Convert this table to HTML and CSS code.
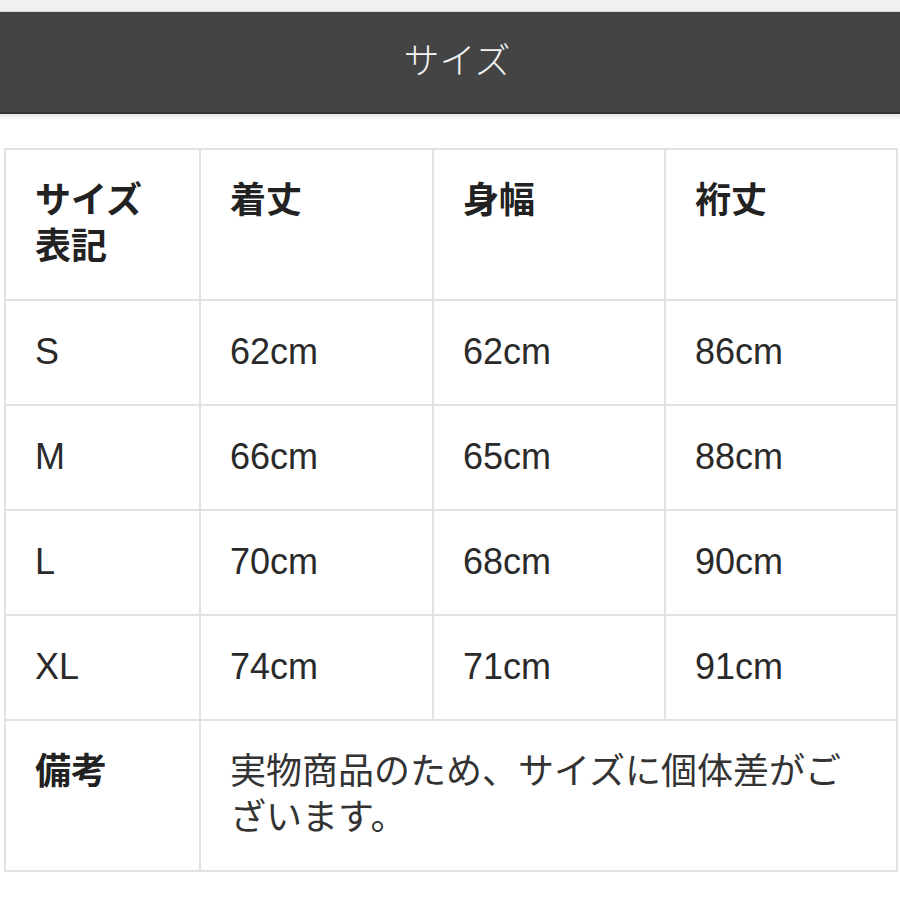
FILE: index.html
```html
<!DOCTYPE html>
<html lang="ja">
<head>
<meta charset="utf-8">
<title>サイズ</title>
<link rel="stylesheet" href="styles.css">
</head>
<body>
<div class="topband"></div>
<header class="bar"><h1 class="bar-title">サイズ</h1></header>
<div class="shadow"></div>
<main class="content">
<table class="size-table">
<colgroup>
<col class="c1"><col class="c2"><col class="c3"><col class="c4">
</colgroup>
<tr class="head">
<th>サイズ<br>表記</th><th>着丈</th><th>身幅</th><th>裄丈</th>
</tr>
<tr><td>S</td><td>62cm</td><td>62cm</td><td>86cm</td></tr>
<tr><td>M</td><td>66cm</td><td>65cm</td><td>88cm</td></tr>
<tr><td>L</td><td>70cm</td><td>68cm</td><td>90cm</td></tr>
<tr><td>XL</td><td>74cm</td><td>71cm</td><td>91cm</td></tr>
<tr class="note">
<th>備考</th><td colspan="3" class="note-text">実物商品のため、サイズに個体差がございます。</td>
</tr>
</table>
</main>
</body>
</html>
```

FILE: styles.css
```css
html, body {
  margin: 0;
  padding: 0;
  background: #ffffff;
}
body {
  font-family: "Liberation Sans", "Noto Sans CJK JP", sans-serif;
  color: #222222;
}
.topband {
  height: 12px;
  background: #f1f1f1;
  border-bottom: 1px solid #d8d8d8;
  box-sizing: border-box;
}
.bar {
  height: 100px;
  background: #444444;
  border-bottom: 2px solid #333333;
  display: flex;
  align-items: center;
  justify-content: center;
}
.bar-title {
  margin: 0;
  font-family: "Noto Sans CJK JP", sans-serif;
  font-weight: 300;
  font-size: 36px;
  color: #f4f4f4;
  line-height: 1;
  padding: 0 0 8px 14px;
}
.shadow {
  height: 5px;
  background: linear-gradient(#e6e6e6, #f8f8f8);
}
.content {
  padding: 29px 4px 0 4px;
}
.size-table {
  border-collapse: collapse;
  width: 892px;
  table-layout: fixed;
}
.c1 { width: 195px; }
.c2 { width: 233px; }
.c3 { width: 232px; }
.c4 { width: 232px; }
.size-table th,
.size-table td {
  border: 2px solid #e2e2e2;
  padding: 28px 20px 29px 29px;
  text-align: left;
  vertical-align: top;
  font-size: 36px;
  line-height: 46px;
  color: #2a2a2a;
}
.size-table th {
  font-family: "Noto Sans CJK JP", sans-serif;
  font-weight: 700;
  padding-top: 24px;
  padding-bottom: 33px;
  color: #222222;
}
.size-table td.note-text {
  font-family: "Noto Sans CJK JP", sans-serif;
  color: #333333;
  padding-top: 24px;
  padding-bottom: 33px;
}
```
